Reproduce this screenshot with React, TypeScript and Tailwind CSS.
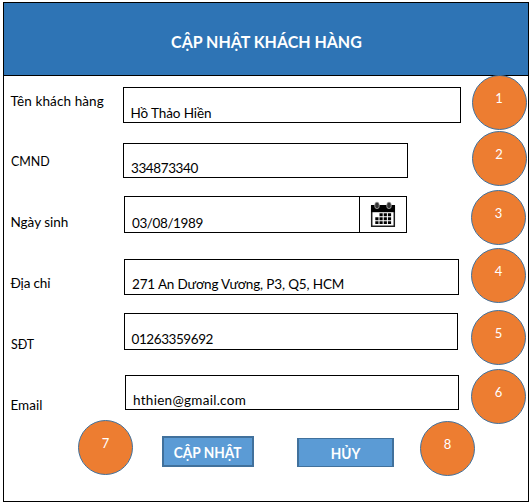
type Field = {
  label: string;
  value: string;
  badge: string;
  row: string;
  labelPos: string;
  box: string;
  text: string;
  badgePos: string;
  date?: boolean;
};

const fields: Field[] = [
  { label: "Tên khách hàng", value: "Hồ Thảo Hiền", badge: "1", row: "h-[55px]", labelPos: "mt-[15px] tracking-[0.1px]", box: "mt-[11px] w-[338px] h-[36px]", text: "pl-[6.5px] pt-[15px] tracking-[-0.1px]", badgePos: "-mt-px ml-[0.5px]" },
  { label: "CMND", value: "334873340", badge: "2", row: "h-[59px]", labelPos: "mt-[20px] origin-left scale-x-[0.92]", box: "mt-[12px] w-[285px] h-[35px]", text: "pl-[7px] pt-[14px] tracking-[-0.4px]", badgePos: "ml-[0.5px]" },
  { label: "Ngày sinh", value: "03/08/1989", badge: "3", row: "h-[58px]", labelPos: "mt-[22px]", box: "ml-px mt-[6px] w-[283px] h-[37px]", text: "pl-[7px] pt-[16px] tracking-[-0.4px]", badgePos: "", date: true },
  { label: "Địa chỉ", value: "271 An Dương Vương, P3, Q5, HCM", badge: "4", row: "h-[62px]", labelPos: "mt-[25px] tracking-[-0.15px]", box: "ml-px mt-[11px] w-[335px] h-[36px]", text: "pl-[7px] pt-[14px] tracking-[-0.15px]", badgePos: "" },
  { label: "SĐT", value: "01263359692", badge: "5", row: "h-[59px]", labelPos: "mt-[24px] origin-left scale-x-[0.92]", box: "ml-px mt-[3px] w-[334px] h-[37px]", text: "pl-[6.5px] pt-[15px] tracking-[-0.42px]", badgePos: "" },
  { label: "Email", value: "hthien@gmail.com", badge: "6", row: "h-[51px]", labelPos: "mt-[26px]", box: "ml-[2px] mt-[6px] w-[334px] h-[35px]", text: "pl-[7px] pt-[14px] tracking-[0.28px]", badgePos: "" },
];

function Badge({ n, className = "" }: { n: string; className?: string }) {
  return (
    <div className={`h-[55px] w-[55px] shrink-0 rounded-full border border-[#41719c] bg-[#ed7d31] pt-[12px] text-center text-[13px] leading-[20px] text-white ${className}`}>
      {n}
    </div>
  );
}

function CalendarIcon() {
  return (
    <svg width="26" height="27" viewBox="0 0 26 27">
      <path d="M1.7 5.5h22.6v19.8H1.7z" fill="#fff" stroke="#1c1c1c" strokeWidth="1.5" />
      <path d="M1 4h24v7.2H1z" fill="#000" />
      <rect x="4.8" y="1" width="4.4" height="6.6" rx="2.2" fill="#333" stroke="#ccc" strokeWidth=".7" />
      <rect x="16.8" y="1" width="4.4" height="6.6" rx="2.2" fill="#333" stroke="#ccc" strokeWidth=".7" />
      <path d="M9.5 12.3h3.2v2.9H9.5zm4.2 0h3.2v2.9h-3.2zm4.2 0h3.2v2.9h-3.2zM5.3 16.3h3.2v2.9H5.3zm4.2 0h3.2v2.9H9.5zm4.2 0h3.2v2.9h-3.2zm4.2 0h3.2v2.9h-3.2zM5.3 20.3h3.2v2.6H5.3zm4.2 0h3.2v2.6H9.5zm4.2 0h3.2v2.6h-3.2zm4.2 0h3.2v2.6h-3.2z" fill="#000" />
    </svg>
  );
}

export default function App() {
  return (
    <div className="h-[504px] w-[532px] overflow-hidden bg-white pl-[3px] pt-[2px] font-[Lato,'Noto_Sans',sans-serif] text-[13.5px] leading-[20px] text-black">
      <main className="h-[500px] w-[526px] border border-black">
        <header className="flex h-[73px] items-center justify-center border-b border-black bg-[#2e74b5] pt-[5px]">
          <h1 className="scale-x-[0.94] whitespace-nowrap text-[17px] font-bold leading-[20px] text-white">CẬP NHẬT KHÁCH HÀNG</h1>
        </header>
        {fields.map((f) => (
          <div key={f.label} className={`flex items-start ${f.row}`}>
            <label className="w-[112px] shrink-0 whitespace-nowrap pl-[6.5px]">
              <span className={`block ${f.labelPos}`}>{f.label}</span>
            </label>
            <div className="flex w-[355px] shrink-0 pl-[7px]">
              <div className={`flex border border-black ${f.box}`}>
                <span className={`grow whitespace-nowrap ${f.text}`}>{f.value}</span>
                {f.date && (
                  <div className="flex w-[47px] shrink-0 items-center justify-center border-l border-black">
                    <CalendarIcon />
                  </div>
                )}
              </div>
            </div>
            <Badge n={f.badge} className={f.badgePos} />
          </div>
        ))}
        <footer className="flex items-start">
          <Badge n="7" className="ml-[74px]" />
          <button className="ml-[29px] mt-[16px] flex h-[31px] w-[92px] justify-center whitespace-nowrap border-2 border-[#41719c] bg-[#5b9bd5] pt-[5px] text-[14.4px] font-bold leading-[20px] text-white">
            <span className="scale-x-[0.95]">CẬP NHẬT</span>
          </button>
          <button className="ml-[43px] mt-[18px] flex h-[29px] w-[97px] justify-center border-x-2 border-y border-[#41719c] bg-[#5b9bd5] pt-[5px] text-[14.4px] font-bold leading-[20px] text-white">
            <span className="scale-x-[0.95]">HỦY</span>
          </button>
          <Badge n="8" className="ml-[26px] mt-px" />
        </footer>
      </main>
    </div>
  );
}
